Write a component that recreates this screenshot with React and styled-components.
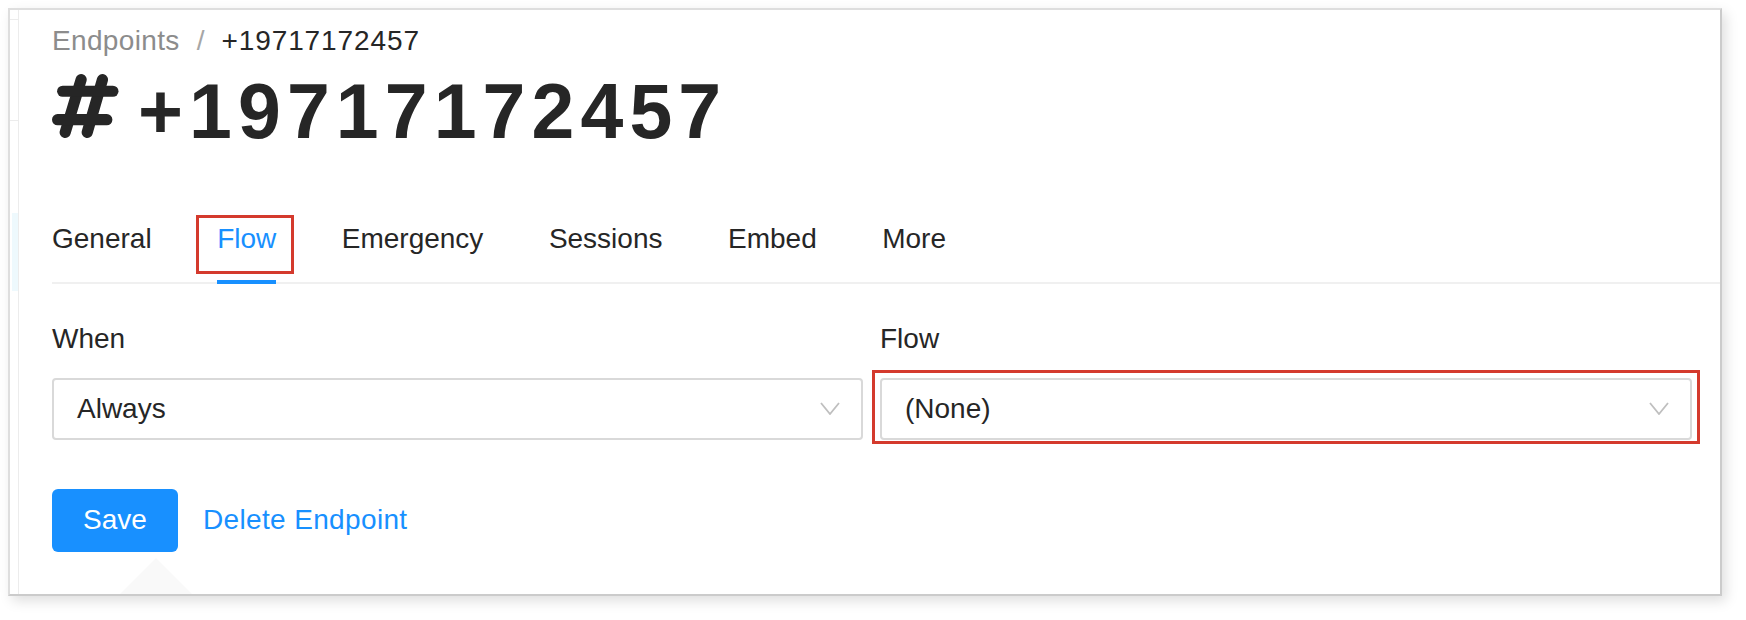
import React from 'react';
import styled, { createGlobalStyle } from 'styled-components';

const GlobalStyle = createGlobalStyle`
  * { box-sizing: border-box; }
  html, body {
    margin: 0;
    padding: 0;
    background: #fff;
    font-family: "Liberation Sans", Arial, sans-serif;
    color: #262626;
  }
`;

const Page = styled.div`
  padding: 8px;
  width: 1746px;
  height: 620px;
  overflow: hidden;
`;

const Card = styled.div`
  width: 1714px;
  display: flex;
  background: #fff;
  border: 2px solid;
  border-color: #dedede #cbcbcb #cbcbcb #dedede;
  box-shadow: 4px 5px 12px rgba(0, 0, 0, 0.13);
`;

const Rail = styled.div`
  width: 9px;
  flex: none;
  display: flex;
  flex-direction: column;
  border-right: 1px solid #ececec;
`;

const RailSeg = styled.div`
  height: ${p => p.h}px;
  flex: none;
  border-bottom: ${p => (p.line ? '1px solid #ececec' : 'none')};
  margin-left: ${p => (p.tint ? '2px' : '0')};
  background: ${p => (p.tint ? '#eef9fd' : 'transparent')};
`;

const Main = styled.div`
  flex: 1;
  padding: 10px 0 42px 33px;
`;

const Breadcrumb = styled.div`
  display: flex;
  align-items: baseline;
  font-size: 28px;
  line-height: 42px;
`;

const Crumb = styled.span`
  color: ${p => (p.current ? '#262626' : '#8c8c8c')};
  letter-spacing: ${p => (p.current ? '0.9px' : '0.35px')};
`;

const Sep = styled.span`
  color: #a6a6a6;
  margin: 0 17px;
`;

const Title = styled.h1`
  display: flex;
  align-items: flex-start;
  gap: 19px;
  margin: 2.5px 0 0;
  font-size: 77px;
  line-height: 92px;
  font-weight: 700;
  letter-spacing: 6.1px;
  color: #262626;
`;

const HashIcon = styled.svg`
  width: 67px;
  height: 64px;
  margin-top: 9px;
  flex: none;
`;

const TabNav = styled.div`
  display: flex;
  gap: 65.5px;
  margin-top: 36.5px;
  border-bottom: 2px solid #f0f0f0;
`;

const Tab = styled.div`
  position: relative;
  padding: 25px 0 21.7px;
  font-size: 28px;
  line-height: 42px;
  color: ${p => (p.active ? '#1890ff' : '#262626')};

  &::after {
    content: '';
    display: ${p => (p.active ? 'block' : 'none')};
    position: absolute;
    left: 0;
    right: 0;
    bottom: -2px;
    height: 4px;
    background: #1890ff;
  }
`;

const Highlight = styled.div`
  position: absolute;
  inset: ${p => p.inset};
  border: 3px solid #d43a2d;
  pointer-events: none;
`;

const Form = styled.div`
  padding: 34.8px 28px 0 0;
`;

const Fields = styled.div`
  display: grid;
  grid-template-columns: 811px 812px;
  column-gap: 17px;
`;

const Field = styled.div`
  display: flex;
  flex-direction: column;
`;

const Label = styled.label`
  font-size: 28px;
  line-height: 42px;
  color: #262626;
  margin-bottom: 17.2px;
`;

const SelectBox = styled.div`
  position: relative;
  height: 62px;
  display: flex;
  align-items: center;
  justify-content: space-between;
  padding: 0 21px 0 23px;
  border: 2px solid #d9d9d9;
  border-radius: 4px;
  font-size: 28px;
  line-height: 42px;
  color: #262626;
  background: #fff;
`;

const Chevron = styled.svg`
  width: 20px;
  height: 13px;
  flex: none;
`;

const Actions = styled.div`
  position: relative;
  display: flex;
  align-items: center;
  gap: 25px;
  margin-top: 49px;
`;

const PrimaryButton = styled.button`
  width: 126px;
  height: 63px;
  border: none;
  border-radius: 6px;
  background: #1890ff;
  color: #fff;
  font-family: inherit;
  font-size: 28px;
  padding: 0;
  cursor: pointer;
`;

const LinkButton = styled.a`
  font-size: 28px;
  letter-spacing: 0.35px;
  color: #1890ff;
  text-decoration: none;
  cursor: pointer;
`;

const ArrowHint = styled.div`
  position: absolute;
  left: 68px;
  top: 69px;
  width: 0;
  height: 0;
  border-left: 36px solid transparent;
  border-right: 36px solid transparent;
  border-bottom: 36px solid #f9f9f9;
`;

const tabs = ['General', 'Flow', 'Emergency', 'Sessions', 'Embed', 'More'];

const Select = ({ value, marked }) => (
  <SelectBox>
    <span>{value}</span>
    <Chevron viewBox="0 0 20 13">
      <polyline points="1,1 10,12 19,1" fill="none" stroke="#bfbfbf" strokeWidth="1.8" />
    </Chevron>
    {marked && <Highlight inset="-10px -10px -6px -10px" />}
  </SelectBox>
);

export default function App() {
  return (
    <Page>
      <GlobalStyle />
      <Card>
        <Rail>
          <RailSeg h={10} line />
          <RailSeg h={101} line />
          <RailSeg h={92} />
          <RailSeg h={78} tint />
        </Rail>
        <Main>
          <Breadcrumb>
            <Crumb>Endpoints</Crumb>
            <Sep>/</Sep>
            <Crumb current>+19717172457</Crumb>
          </Breadcrumb>
          <Title>
            <HashIcon viewBox="0 0 66 63">
              <g stroke="#262626" strokeWidth="11" strokeLinecap="round" fill="none">
                <line x1="28.7" y1="5.5" x2="13" y2="57.5" />
                <line x1="49.7" y1="5.5" x2="34.7" y2="57.5" />
                <line x1="10.5" y1="17" x2="60" y2="17" />
                <line x1="5.5" y1="45" x2="54" y2="45" />
              </g>
            </HashIcon>
            <span>+19717172457</span>
          </Title>
          <TabNav>
            {tabs.map(t => (
              <Tab key={t} active={t === 'Flow'}>
                {t}
                {t === 'Flow' && <Highlight inset="22px -18px 8px -21px" />}
              </Tab>
            ))}
          </TabNav>
          <Form>
            <Fields>
              <Field>
                <Label>When</Label>
                <Select value="Always" />
              </Field>
              <Field>
                <Label>Flow</Label>
                <Select value="(None)" marked />
              </Field>
            </Fields>
            <Actions>
              <PrimaryButton>Save</PrimaryButton>
              <LinkButton>Delete Endpoint</LinkButton>
              <ArrowHint />
            </Actions>
          </Form>
        </Main>
      </Card>
    </Page>
  );
}
